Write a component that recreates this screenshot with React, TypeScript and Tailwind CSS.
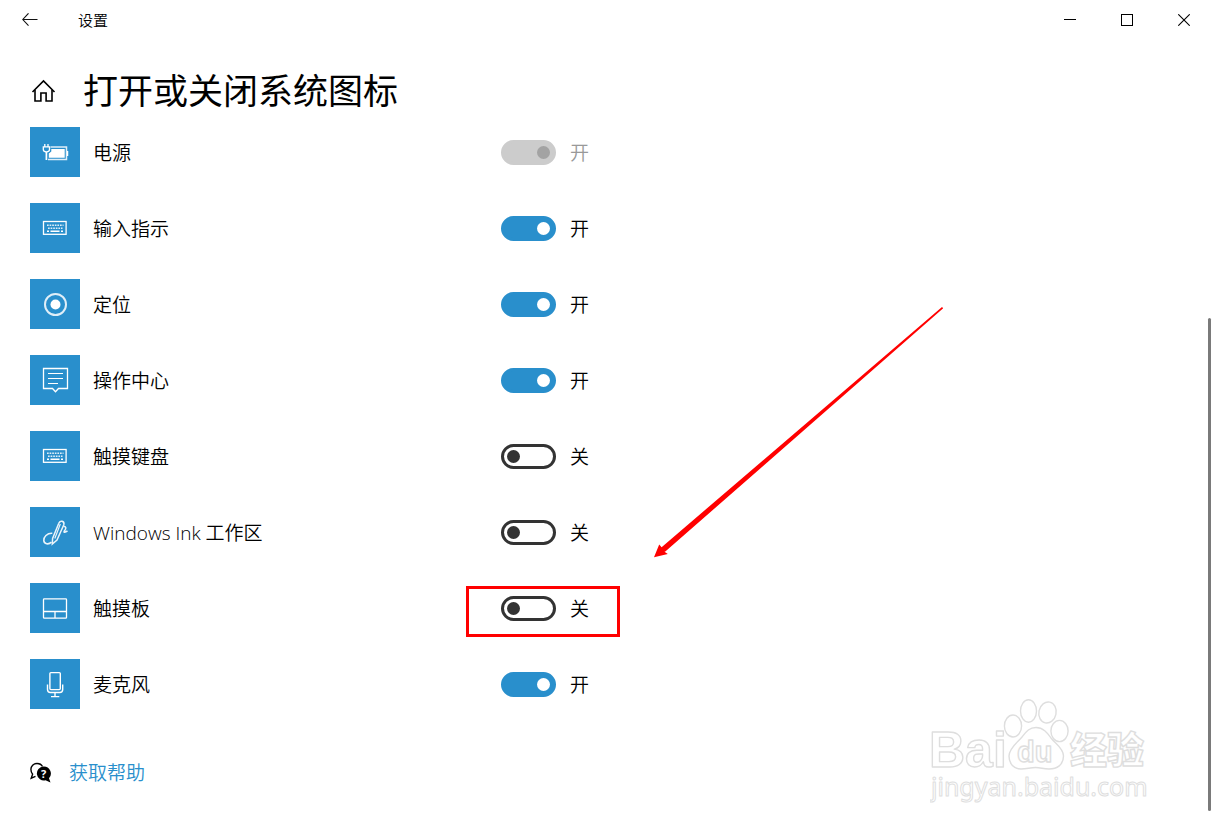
import { useState } from "react";
import type { ReactNode } from "react";

interface SystemIcon {
  id: string;
  label: string;
  on: boolean;
  disabled?: boolean;
  highlighted?: boolean;
  glyph: ReactNode;
}

const KeyboardGlyph = (
  <>
    <rect x="13.5" y="18.5" width="22.6" height="12.8" strokeWidth="1.3" />
    <path d="M17 22.2H33.5M18 25.2H32.5" strokeWidth="1.6" strokeDasharray="1.7 0.9" opacity="0.85" />
    <path d="M17 28.2H19M20.5 28.2H29.5M31 28.2H33" strokeWidth="1.4" />
  </>
);

const ITEMS: SystemIcon[] = [
  {
    id: "power",
    label: "电源",
    on: true,
    disabled: true,
    glyph: (
      <>
        <path d="M20.5 20H36.5V32.5H18" strokeWidth="1.5" opacity="0.85" />
        <path d="M37.6 24V29" strokeWidth="1.3" />
        <path d="M21.3 22H34.7V30.7H18.8V26.5L21.3 24.5Z" fill="white" stroke="none" />
        <path d="M14.8 17V20M18 17V20" strokeWidth="1.3" />
        <path d="M13.3 19.8H19.5V22.6Q19.5 25 16.4 25Q13.3 25 13.3 22.6Z" strokeWidth="1.3" />
        <path d="M16.4 25V33" strokeWidth="1.7" />
      </>
    ),
  },
  { id: "input", label: "输入指示", on: true, glyph: KeyboardGlyph },
  {
    id: "location",
    label: "定位",
    on: true,
    glyph: (
      <>
        <circle cx="25.5" cy="25.5" r="10.5" strokeWidth="2" opacity="0.85" />
        <circle cx="25.5" cy="25.5" r="5" fill="white" stroke="none" />
      </>
    ),
  },
  {
    id: "action-center",
    label: "操作中心",
    on: true,
    glyph: (
      <>
        <path d="M13.5 13.5H37.5V33.5H28.5L25.5 36.8L22.5 33.5H13.5Z" strokeWidth="1.3" />
        <path d="M18 18.5H33M18 23.5H33M18 28.5H28" strokeWidth="1.2" />
      </>
    ),
  },
  { id: "touch-keyboard", label: "触摸键盘", on: false, glyph: KeyboardGlyph },
  {
    id: "ink",
    label: "Windows Ink 工作区",
    on: false,
    glyph: (
      <g opacity="0.9">
        <path d="M22.3 37L22.6 31.5L28.8 16.2C30 12.8 34.8 14 33.8 17.8L27 33L22.3 37Z" strokeWidth="1.5" />
        <path d="M30.3 17L24.8 31.5" strokeWidth="1.2" />
        <path d="M22.3 26.3C17 26 13.5 30 13.8 33.6C14.2 37 18.3 38 21.5 35.2" strokeWidth="1.6" />
        <path d="M33.6 19.2C36.5 19.5 36.4 21.8 34.2 24.2C33.5 25.8 35.3 25.2 37.5 24" strokeWidth="1.6" />
      </g>
    ),
  },
  {
    id: "touchpad",
    label: "触摸板",
    on: false,
    highlighted: true,
    glyph: (
      <>
        <rect x="13.5" y="15.8" width="23" height="19.4" rx="0.8" strokeWidth="1.3" />
        <path d="M13.5 28.5H36.5M25 28.5V35" strokeWidth="1.3" />
      </>
    ),
  },
  {
    id: "microphone",
    label: "麦克风",
    on: true,
    glyph: (
      <>
        <rect x="19.9" y="13.6" width="10.4" height="17" rx="1" strokeWidth="1.4" />
        <path d="M17.5 25.5V30.5Q17.5 33.5 20.5 33.5H29.7Q32.7 33.5 32.7 30.5V25.5" strokeWidth="1.4" />
        <path d="M25 33.5V37.5M21 37.6H29.3" strokeWidth="1.4" />
      </>
    ),
  },
];

function TitleBar() {
  return (
    <header className="flex h-10 items-stretch justify-between pr-px">
      <div className="flex items-center">
        <button aria-label="返回" className="flex h-10 w-[60px] items-center justify-center">
          <svg width="16" height="14" viewBox="0 0 16 14" fill="none" stroke="#111" strokeWidth="1.1">
            <path d="M15.5 6.5H1M6.5 0.3L0.8 6.5L6.5 12.7" />
          </svg>
        </button>
        <span className="ml-[18px] text-[15px] leading-5">设置</span>
      </div>
      <div className="flex">
        <button aria-label="最小化" className="flex w-[57px] items-center justify-center">
          <svg width="12" height="12" viewBox="0 0 12 12" stroke="black">
            <path d="M0 5.5H12" />
          </svg>
        </button>
        <button aria-label="最大化" className="flex w-[57px] items-center justify-center">
          <svg width="12" height="12" viewBox="0 0 12 12" fill="none" stroke="black">
            <rect x="0.5" y="0.5" width="11" height="11" />
          </svg>
        </button>
        <button aria-label="关闭" className="flex w-[57px] items-center justify-center">
          <svg width="12" height="12" viewBox="0 0 12 12" stroke="black" strokeWidth="1.1">
            <path d="M0.3 0.3L11.7 11.7M11.7 0.3L0.3 11.7" />
          </svg>
        </button>
      </div>
    </header>
  );
}

/* Red frame round the switch and the arrow that leads to it */
function Callout() {
  return (
    <>
      <div className="pointer-events-none absolute top-[3px] -left-[35px] h-[51px] w-[154px] border-3 border-[#ff0000]" />
      <svg
        className="pointer-events-none absolute -top-[276px] left-[153px]"
        width="290"
        height="251"
        viewBox="0 0 290 251"
        fill="#ff0000"
      >
        <path d="M0 250.2L5.2 237.5L7.6 240.2L288 0L289.2 1.2L11.3 244.6L10.5 244.8L13.8 247Z" />
      </svg>
    </>
  );
}

function SettingRow({ item }: { item: SystemIcon }) {
  const [on, setOn] = useState(item.on);

  return (
    <li className="flex h-[50px]">
      <label htmlFor={item.id} className="flex w-[471px] shrink-0 items-center gap-[13px]">
        <svg
          className="bg-[#298fcc]"
          width="50"
          height="50"
          viewBox="0 0 50 50"
          fill="none"
          stroke="white"
          aria-hidden="true"
        >
          {item.glyph}
        </svg>
        <span className="pt-px text-[19px] leading-6">{item.label}</span>
      </label>
      <div className="relative flex items-center gap-[14px]">
        <input
          id={item.id}
          type="checkbox"
          role="switch"
          checked={on}
          disabled={item.disabled}
          onChange={(e) => setOn(e.target.checked)}
          className="flex h-[25px] w-[55px] appearance-none items-center rounded-full border-3 border-[#333] px-[3px] before:size-[13px] before:rounded-full before:bg-[#333] before:content-[''] checked:justify-end checked:border-[#298fcc] checked:bg-[#298fcc] checked:before:bg-white disabled:border-[#ccc] disabled:bg-[#ccc] disabled:before:bg-[#a3a3a3]"
        />
        <span className={item.disabled ? "pt-0.5 text-[19px] leading-6 text-[#999]" : "pt-0.5 text-[19px] leading-6"}>
          {on ? "开" : "关"}
        </span>
        {item.highlighted && <Callout />}
      </div>
    </li>
  );
}

function Watermark() {
  return (
    <svg
      className="pointer-events-none absolute right-[63px] bottom-[24px]"
      width="220"
      height="108"
      viewBox="0 0 220 108"
      fill="white"
      stroke="#dedede"
      strokeWidth="1.4"
      strokeLinejoin="round"
    >
      <text x="-1" y="69" fontSize="50" fontWeight="700" fontFamily="Liberation Sans, sans-serif">
        Bai
      </text>
      <ellipse cx="83" cy="28" rx="8.6" ry="11" />
      <ellipse cx="98.5" cy="13" rx="8" ry="11.2" />
      <ellipse cx="117.5" cy="14.5" rx="8.6" ry="10.6" transform="rotate(12 117.5 14.5)" />
      <ellipse cx="129.5" cy="33" rx="8.6" ry="10.6" />
      <path d="M106 29.5C114 29.5 118 36 121 40C125 45.5 133.5 50 133.5 58C133.5 67 127 71 119 71C113 71 111 69.5 105.5 69.5C100 69.5 97 71 91 71C84 71 79 66 79 58C79 50 88 44 92 39C96 34 99 29.5 106 29.5Z" />
      <text x="87" y="64" fontSize="29" fontWeight="700" fontFamily="Liberation Sans, sans-serif">
        du
      </text>
      <text x="140" y="66" fontSize="37" fontWeight="900" fontFamily="Noto Sans CJK SC, sans-serif">
        经验
      </text>
      <text x="1" y="98" fontSize="25" fontWeight="400" strokeWidth="1" fontFamily="Noto Sans, sans-serif">
        jingyan.baidu.com
      </text>
    </svg>
  );
}

export default function App() {
  return (
    <div className="relative flex min-h-screen flex-col overflow-hidden bg-white font-['Open_Sans','Noto_Sans_CJK_SC',sans-serif] font-[350] text-black">
      <TitleBar />

      <div className="flex flex-1">
        <main className="flex-1 pb-10 pl-[30px]">
          {/* Page heading */}
          <div className="flex h-[87px] items-center gap-[27px] pt-[15px]">
            <a href="#home" aria-label="主页">
              <svg width="26" height="24" viewBox="0 0 26 24" fill="none" stroke="black" strokeWidth="1.6">
                <path d="M2.5 13L13.5 2L24.5 13" />
                <path d="M5 11V22H10.9V14H16.1V22H22V11" />
              </svg>
            </a>
            <h1 className="text-[35px] leading-[46px] font-normal">打开或关闭系统图标</h1>
          </div>

          <ul className="flex flex-col gap-[26px]">
            {ITEMS.map((item) => (
              <SettingRow key={item.id} item={item} />
            ))}
          </ul>

          <div className="mt-[52px] flex items-center gap-[17px]">
            <svg width="22" height="22" viewBox="0 0 22 22" fill="none" aria-hidden="true">
              <path
                d="M7 1.5C3.5 1.5 0.9 4 0.9 7.3C0.9 9.6 1.6 11 2.6 12.2L1.2 16.2L5.5 14.4M7 1.5C9.5 1.5 11.5 2.5 12.5 4.5"
                stroke="black"
                strokeWidth="1.4"
              />
              <path
                d="M13.5 4.5A7 7 0 1 0 15.5 18.3L20.5 20.5L19 16.2A7 7 0 0 0 13.5 4.5Z"
                fill="black"
              />
              <text x="13.5" y="16" textAnchor="middle" fontSize="11" fontWeight="700" fill="white">
                ?
              </text>
            </svg>
            <a href="#help" className="text-[19px] leading-6 text-[#298fcc]">
              获取帮助
            </a>
          </div>
        </main>

        {/* Scroll bar, at the end of the list */}
        <div className="flex w-[5px] flex-col pr-0.5 pb-[19px]">
          <div className="flex-[278]" />
          <div className="flex-[493] rounded-sm bg-[#7a7a7a]" />
        </div>
      </div>

      <Watermark />
    </div>
  );
}
